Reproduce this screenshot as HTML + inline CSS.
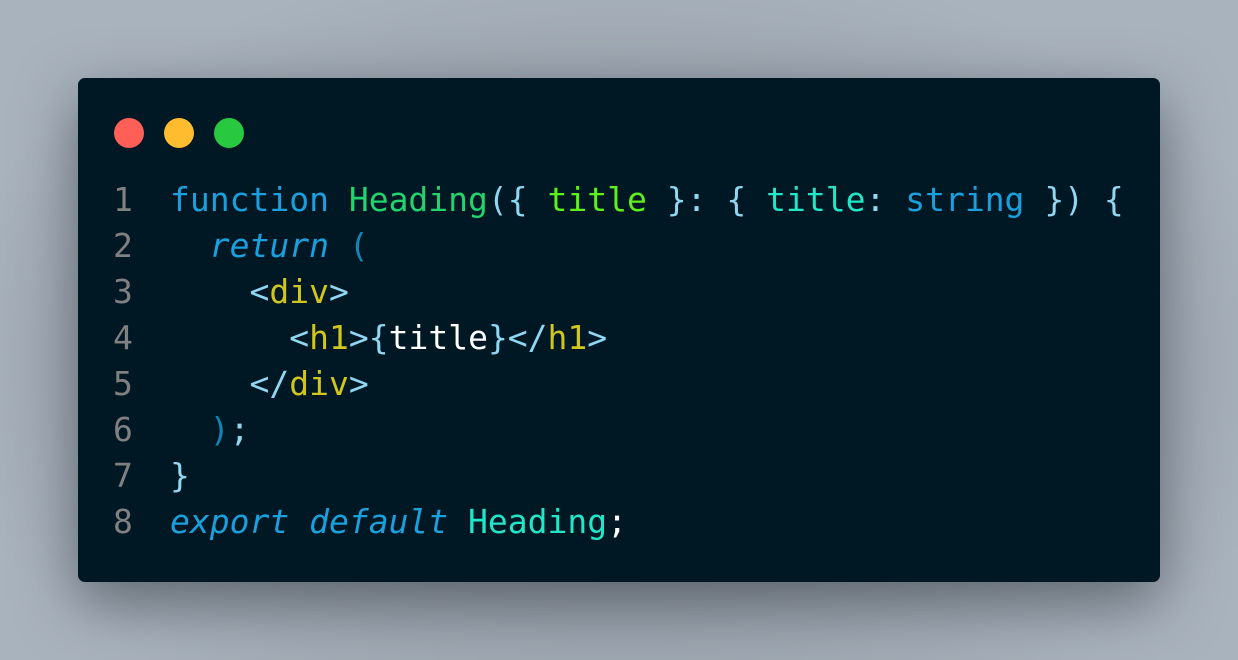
<!DOCTYPE html>
<html><head><style>
html,body{margin:0;padding:0}
body{width:1238px;height:660px;overflow:hidden;background:radial-gradient(ellipse at 50% 55%,#7a8089 0%,#98a1ab 45%,#a9b3bd 80%);position:relative;font-family:"DejaVu Sans Mono","Liberation Mono",monospace}
.win{position:absolute;left:78px;top:78px;width:1082px;height:504px;background:#001724;border-radius:7px;box-shadow:0 20px 60px rgba(40,45,55,.55)}
.dot{position:absolute;top:40px;width:30px;height:30px;border-radius:50%}
.code{position:absolute;left:35px;top:99px;font-size:33px;line-height:46px;white-space:pre;color:#fff;letter-spacing:0}
.ln{color:#808080;display:inline-block;width:57px}
.k{color:#1aa0dc}.i{font-style:italic;color:#1aa0dc}.f{color:#22d36e}.g{color:#5df01a}.c{color:#21e6c8}.p{color:#8fd7f2}.y{color:#d0c61e}.b{color:#0f88b8}
</style></head><body>
<div class="win">
<div class="dot" style="left:36px;background:#ff5f57"></div>
<div class="dot" style="left:86px;background:#febc2e"></div>
<div class="dot" style="left:136px;background:#28c840"></div>
<div class="code"><span class="ln">1</span><span class="k">function</span> <span class="f">Heading</span><span class="p">({</span> <span class="g">title</span> <span class="p">}:</span> <span class="p">{</span> <span class="c">title</span><span class="p">:</span> <span class="k">string</span> <span class="p">}) {</span>
<span class="ln">2</span>  <span class="i">return</span> <span class="b">(</span>
<span class="ln">3</span>    <span class="p">&lt;</span><span class="y">div</span><span class="p">&gt;</span>
<span class="ln">4</span>      <span class="p">&lt;</span><span class="y">h1</span><span class="p">&gt;{</span>title<span class="p">}&lt;/</span><span class="y">h1</span><span class="p">&gt;</span>
<span class="ln">5</span>    <span class="p">&lt;/</span><span class="y">div</span><span class="p">&gt;</span>
<span class="ln">6</span>  <span class="b">)</span><span class="p">;</span>
<span class="ln">7</span><span class="p">}</span>
<span class="ln">8</span><span class="i">export</span> <span class="i">default</span> <span class="c">Heading</span>;</div>
</div>
</body></html>
